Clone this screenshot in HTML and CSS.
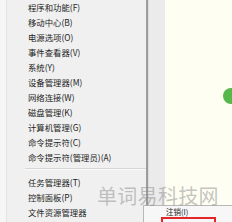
FILE: index.html
```html
<!DOCTYPE html>
<html lang="zh-CN">
<head>
<meta charset="utf-8">
<link rel="stylesheet" href="styles.css">
</head>
<body>
<div class="screen">
  <div class="menu">
    <div class="rail"></div>
    <ul class="items">
      <li>程序和功能(F)</li>
      <li>移动中心(B)</li>
      <li>电源选项(O)</li>
      <li>事件查看器(V)</li>
      <li>系统(Y)</li>
      <li>设备管理器(M)</li>
      <li>网络连接(W)</li>
      <li>磁盘管理(K)</li>
      <li>计算机管理(G)</li>
      <li>命令提示符(C)</li>
      <li>命令提示符(管理员)(A)</li>
      <li class="sep"></li>
      <li>任务管理器(T)</li>
      <li>控制面板(P)</li>
      <li>文件资源管理器</li>
      <li>搜索(S)</li>
    </ul>
  </div>
  <div class="divider"></div>
  <div class="shade"></div>
  <div class="desk"></div>
  <div class="dot"></div>
  <div class="submenu">
    <div class="sub-item">注销(I)</div>
    <div class="sub-hl"></div>
  </div>
  <div class="watermark">单词易科技网</div>
</div>
</body>
</html>
```
FILE: styles.css
```css
html, body {
  margin: 0;
  padding: 0;
}
body {
  width: 232px;
  height: 222px;
  overflow: hidden;
  font-family: "Noto Sans CJK SC", "Noto Sans", sans-serif;
}
.screen {
  position: relative;
  display: grid;
  grid-template-columns: 146px 2px 17px 1fr;
  width: 232px;
  height: 222px;
  overflow: hidden;
}
.menu {
  display: flex;
  background: #f0f0f0;
  overflow: hidden;
}
.rail {
  width: 6px;
  flex: none;
  background: #f6f6f6;
  border-right: 1px solid #e3e3e3;
}
.items {
  list-style: none;
  margin: 0;
  padding: 0 0 0 21px;
  flex: 1;
}
.items li {
  height: 15px;
  line-height: 15px;
  font-size: 8.4px;
  color: #1c1c1c;
  white-space: nowrap;
}
.items li.sep {
  height: 7px;
  margin-left: -3px;
  position: relative;
}
.items li.sep::after {
  content: "";
  display: block;
  margin-top: 3px;
  height: 1px;
  background: #d6d6d6;
  border-bottom: 1px solid #fafafa;
}
.divider {
  background: #9c9c9c;
}
.shade {
  background: #ebebeb;
  border-left: 1px solid #dcdcdc;
}
.desk {
  background: #fefef3;
}
.dot {
  position: absolute;
  left: 223px;
  top: 88px;
  width: 16px;
  height: 16px;
  border-radius: 50%;
  background: #56b84a;
}
.submenu {
  position: absolute;
  left: 143px;
  top: 205px;
  width: 100px;
  height: 30px;
  background: #f7f7f7;
  border: 1px solid #b8b8b8;
}
.sub-item {
  padding-left: 22px;
  height: 11px;
  line-height: 11px;
  font-size: 7.5px;
  color: #222;
}
.sub-hl {
  margin-left: 17px;
  width: 51px;
  height: 10px;
  border: 2px solid #e3262a;
}
.watermark {
  position: absolute;
  left: 97px;
  top: 184px;
  font-size: 20px;
  line-height: 24px;
  color: rgba(140, 140, 140, 0.5);
  white-space: nowrap;
  letter-spacing: 0.3px;
}
```
